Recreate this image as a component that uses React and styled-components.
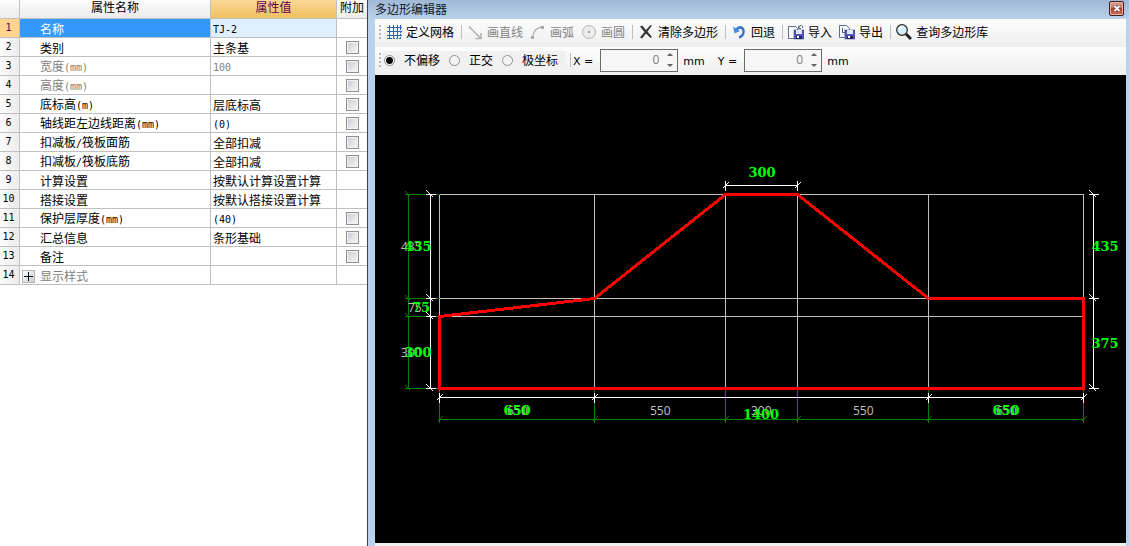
import React, { useState } from "react";
import styled, { createGlobalStyle } from "styled-components";

const GlobalStyle = createGlobalStyle`
  * { box-sizing: border-box; }
  body {
    margin: 0;
    background: #fff;
    color: #000;
    font: 12px/14px "Noto Sans CJK SC", sans-serif;
  }
  button, input { font: inherit; color: inherit; margin: 0; }
`;

const Page = styled.div`
  display: flex;
  min-height: 100vh;
`;

/* ---------- property grid ---------- */

const PropertyPanel = styled.section`
  flex: 0 0 368px;
  background: #fff;
  border-right: 1px solid #404040;
`;

const Grid = styled.table`
  width: 100%;
  table-layout: fixed;
  border-collapse: separate;
  border-spacing: 0;
`;

const Col = styled.col`
  width: ${(p) => p.$w};
`;

const HeadCell = styled.th`
  height: 19px;
  padding: 0 0 4px;
  font-weight: 400;
  text-align: center;
  white-space: nowrap;
  color: ${(p) => (p.$active ? "#5c0050" : "#000")};
  background: ${(p) =>
    p.$active
      ? "linear-gradient(#f8d899, #f1c15f)"
      : "linear-gradient(#fbfbfb, #ececec)"};
  border: solid #c0c0c0;
  border-width: 0 1px 1px 0;
  &:last-child { border-right: 0; }
`;

const RowNumber = styled.th`
  height: 19px;
  padding: 0 2px 0 0;
  font: 10px/14px "DejaVu Sans Mono", monospace;
  text-align: center;
  color: ${(p) => (p.$active ? "#5c0050" : "#000")};
  background: ${(p) =>
    p.$active ? "#ffd58d" : "linear-gradient(90deg, #fbfbfb, #ececec)"};
  border: solid #c0c0c0;
  border-width: 0 1px 1px 0;
`;

const Cell = styled.td`
  height: 19px;
  padding: 2px 0 0 2px;
  white-space: nowrap;
  color: ${(p) => (p.$muted ? "#808080" : "#000")};
  background: ${(p) => (p.$active ? "#dfeffe" : "#fff")};
  border: solid #c0c0c0;
  border-width: 0 1px 1px 0;
`;

const NameCell = styled(Cell)`
  color: ${(p) => (p.$active ? "#fff" : p.$muted ? "#808080" : "#000")};
  background: ${(p) => (p.$active ? "#3399ff" : "#fff")};
`;

const CheckCell = styled(Cell)`
  padding: 0;
  border-right: 0;
  text-align: center;
`;

const NameLine = styled.div`
  display: flex;
  align-items: center;
  gap: 5px;
`;

const Gutter = styled.span`
  display: flex;
  width: 13px;
`;

const Expander = styled.button`
  display: grid;
  place-items: center;
  width: 13px;
  height: 13px;
  padding: 0;
  border: 1px solid #b4b4b4;
  background: linear-gradient(135deg, #fff, #c9ced4);
  color: #000;
`;

const Latin = styled.span`
  font-family: "DejaVu Sans Mono", monospace;
  font-size: 10px;
`;

const Check = styled.input`
  display: block;
  appearance: none;
  width: 13px;
  height: 13px;
  margin: 0 auto;
  border: 1px solid #8e8f8f;
  background: linear-gradient(135deg, #cdd1d7, #f3f3f3) content-box, #f2f2f2;
  padding: 1px;
`;

const rows = [
  { name: "名称", value: "TJ-2", active: true },
  { name: "类别", value: "主条基", check: true },
  { name: "宽度(mm)", value: "100", check: true, muted: true },
  { name: "高度(mm)", value: "", check: true, muted: true },
  { name: "底标高(m)", value: "层底标高", check: true },
  { name: "轴线距左边线距离(mm)", value: "(0)", check: true },
  { name: "扣减板/筏板面筋", value: "全部扣减", check: true },
  { name: "扣减板/筏板底筋", value: "全部扣减", check: true },
  { name: "计算设置", value: "按默认计算设置计算" },
  { name: "搭接设置", value: "按默认搭接设置计算" },
  { name: "保护层厚度(mm)", value: "(40)", check: true },
  { name: "汇总信息", value: "条形基础", check: true },
  { name: "备注", value: "", check: true },
  { name: "显示样式", value: "", muted: true, expandable: true },
];

/* Half-width characters are set in the mono face, the rest in the CJK one. */
function Mixed({ text }) {
  return text
    .split(/([\x20-\x7e]+)/)
    .filter(Boolean)
    .map((part, i) =>
      /^[\x20-\x7e]/.test(part) ? <Latin key={i}>{part}</Latin> : <span key={i}>{part}</span>
    );
}

function PropertyGrid() {
  return (
    <PropertyPanel>
      <Grid>
        <colgroup>
          <Col $w="20px" />
          <Col $w="191px" />
          <Col $w="126px" />
          <Col $w="auto" />
        </colgroup>
        <thead>
          <tr>
            <HeadCell />
            <HeadCell scope="col">属性名称</HeadCell>
            <HeadCell scope="col" $active>属性值</HeadCell>
            <HeadCell scope="col">附加</HeadCell>
          </tr>
        </thead>
        <tbody>
          {rows.map((r, i) => (
            <tr key={r.name}>
              <RowNumber scope="row" $active={r.active}>{i + 1}</RowNumber>
              <NameCell $active={r.active} $muted={r.muted}>
                <NameLine>
                  <Gutter>
                    {r.expandable && (
                      <Expander aria-label="展开">
                        <svg width="9" height="9" shapeRendering="crispEdges">
                          <path d="M4 0h1v9h-1zM0 4h9v1h-9z" fill="#000" />
                        </svg>
                      </Expander>
                    )}
                  </Gutter>
                  <span><Mixed text={r.name} /></span>
                </NameLine>
              </NameCell>
              <Cell $active={r.active} $muted={r.muted}><Mixed text={r.value} /></Cell>
              <CheckCell>
                {r.check && <Check type="checkbox" aria-label={r.name} />}
              </CheckCell>
            </tr>
          ))}
        </tbody>
      </Grid>
    </PropertyPanel>
  );
}

/* ---------- polygon editor ---------- */

const Editor = styled.section`
  flex: 1;
  min-width: 0;
  display: flex;
  flex-direction: column;
  padding: 0 3px 0 7px;
  background: linear-gradient(#9fb9d6, #b9d1ea 19px);
`;

const TitleBar = styled.header`
  display: flex;
  align-items: center;
  justify-content: space-between;
  height: 19px;
  padding: 0 2px 2px 0;
  color: #101820;
`;

const Title = styled.h1`
  margin: 0;
  font: inherit;
`;

const CloseButton = styled.button`
  display: grid;
  place-items: center;
  width: 15px;
  height: 15px;
  padding: 0;
  border: 1px solid #471b20;
  border-radius: 2px;
  background: linear-gradient(#dca193, #c87565 45%, #b13e2b 50%, #c9735f);
  box-shadow: inset 0 0 0 1px #e2b3a8;
`;

const Toolbar = styled.div`
  display: flex;
  align-items: center;
  height: 28px;
  padding: 0 0 2px 4px;
  background: linear-gradient(#fdfdfd, #eeeeee);
`;

const Grip = styled.span`
  width: 2px;
  height: 14px;
  margin-right: 1px;
  background: repeating-linear-gradient(#b8b8b8 0 2px, transparent 2px 4px);
`;

const Tool = styled.button`
  display: flex;
  align-items: center;
  gap: 4px;
  padding: 0 3px 0 4px;
  border: 0;
  background: none;
  white-space: nowrap;
  &:disabled { color: #838383; }
`;

const Separator = styled.span`
  width: 1px;
  height: 14px;
  margin: 0 1px 0 4px;
  background: #bdbdbd;
`;

const RadioGroup = styled.div`
  display: flex;
  align-items: center;
  gap: 9px;
  height: 18px;
  padding: 0 8px 0 2px;
  background: #f0f0f0;
`;

const RadioLabel = styled.label`
  display: flex;
  align-items: center;
  gap: 9px;
  white-space: nowrap;
`;

const Radio = styled.input`
  appearance: none;
  width: 11px;
  height: 11px;
  border: 1px solid #8e8f8f;
  border-radius: 50%;
  background: #f4f4f4;
  &:checked { background: radial-gradient(circle, #000 3px, #f8f8f8 4px); }
`;

const Field = styled.div`
  display: flex;
  align-items: center;
  margin-right: 12px;
  font: 11px/14px "DejaVu Sans", sans-serif;
`;

const FieldLabel = styled.label`
  padding: 4px 7px 0 1px;
  white-space: nowrap;
`;

const Unit = styled.span`
  padding-top: 4px;
`;

const SpinBox = styled.span`
  display: flex;
  width: 78px;
  height: 23px;
  margin-right: 5px;
  border: 1px solid #6a6a6a;
  background: #f6f6f6;
`;

const SpinInput = styled.input`
  flex: 1;
  min-width: 0;
  padding: 0 4px 0 0;
  border: 0;
  outline: 0;
  background: none;
  color: #808080;
  text-align: right;
  font: 12px/14px "Open Sans", sans-serif;
`;

const SpinButtons = styled.span`
  display: flex;
  flex-direction: column;
  width: 14px;
`;

const SpinButton = styled.button`
  flex: 1;
  display: grid;
  place-items: center;
  padding: 0;
  border: 0;
  background: none;
`;

const Canvas = styled.svg`
  display: block;
  flex: 1;
  width: 100%;
  min-height: 360px;
  background: #000;
`;

const StatusStrip = styled.footer`
  height: 3px;
  background: #f0f0f0;
`;

const DimText = styled.text`
  fill: #00ff00;
  font: bold 13px "DejaVu Serif", serif;
`;

const GridText = styled.text`
  fill: #c0c0c0;
  font: 12px "Open Sans", sans-serif;
`;

/* ---------- icons ---------- */

const Icon = ({ children }) => (
  <svg width="16" height="16" viewBox="0 0 16 16" fill="none">{children}</svg>
);

const GridIcon = () => (
  <Icon>
    <path d="M3.5 1v14M7.5 1v14M11.5 1v14M1 3.5h15M1 7.5h15M1 11.5h15" stroke="#2f62c0" shapeRendering="crispEdges" />
    <path d="M14.5 1v14M1 14.5h14" stroke="#2f62c0" strokeDasharray="2 1" shapeRendering="crispEdges" />
  </Icon>
);
const LineIcon = () => (
  <Icon>
    <path d="M2 2.5L13 13.5M14 9v5.500H8.500" stroke="#b0b0b0" strokeWidth="1.500" />
  </Icon>
);
const ArcIcon = () => (
  <Icon>
    <path d="M3 13C3 8 6 4 12 3" stroke="#b4b4b4" strokeWidth="1.300" />
    <rect x="1" y="12" width="3" height="3" fill="#a8a8a8" />
    <rect x="11" y="2" width="3" height="3" fill="#a8a8a8" />
  </Icon>
);
const CircleIcon = () => (
  <Icon>
    <circle cx="8" cy="8" r="6.500" fill="#ececec" stroke="#b4b4b4" />
    <rect x="7" y="7" width="2" height="2" fill="#999" />
  </Icon>
);
const ClearIcon = () => (
  <Icon>
    <path d="M2 2.500L4 1.500L8 6L12.500 1L14 1.500L9.500 7.500L14 13L12.500 14L8 9.500L4 14.500L2 13.500L6.500 8Z" fill="#343434" />
  </Icon>
);
const UndoIcon = () => (
  <Icon>
    <path d="M5.500 5.500C8 2 12.500 3 12.500 7.500C12.500 10.500 11 12.500 8 13.500" stroke="#3b74c9" strokeWidth="2.500" />
    <path d="M2 2.500L3.500 9.500L9 7Z" fill="#4c8add" />
  </Icon>
);
const Disk = () => (
  <>
    <rect x="6" y="6" width="10" height="9" fill="#5757b5" stroke="#34348a" strokeWidth="0.500" />
    <rect x="8" y="6" width="6" height="4" fill="#dfe6fa" />
    <rect x="8" y="12" width="6" height="3" fill="#252560" />
    <rect x="9" y="12" width="2" height="2" fill="#fff" />
  </>
);
const ImportIcon = () => (
  <Icon>
    <path d="M.5 2.500H7.500L9.500 4.500V14.500H.5Z" fill="#f8fbff" stroke="#5d6f94" />
    <path d="M11 1.500L10.500 4.500H13M10.500 4C12 .5 15.500 1 14.500 4" stroke="#4c5a78" />
    <Disk />
  </Icon>
);
const ExportIcon = () => (
  <Icon>
    <path d="M.5 1.500H7.500L10.500 4.500V13.500H.5Z" fill="#f3f7fe" stroke="#5d6f94" />
    <path d="M3.500 4V8.500H7M5.500 6L7.500 8.500L5.500 10.500" stroke="#4c5a78" />
    <Disk />
  </Icon>
);
const SearchIcon = () => (
  <Icon>
    <circle cx="6" cy="6" r="5.300" fill="#d4effd" stroke="#252525" strokeWidth="1.200" />
    <path d="M3 6C3 4 4.500 3 6 3" stroke="#fff" strokeWidth="1.500" />
    <path d="M10 10L15 15" stroke="#202020" strokeWidth="3" />
  </Icon>
);

const toolGroups = [
  [["定义网格", GridIcon]],
  [["画直线", LineIcon, true], ["画弧", ArcIcon, true], ["画圆", CircleIcon, true]],
  [["清除多边形", ClearIcon]],
  [["回退", UndoIcon]],
  [["导入", ImportIcon], ["导出", ExportIcon]],
  [["查询多边形库", SearchIcon]],
];

function OffsetField({ axis }) {
  const [value, setValue] = useState(0);
  const id = `offset-${axis}`;
  return (
    <Field>
      <FieldLabel htmlFor={id}>{axis} =</FieldLabel>
      <SpinBox>
        <SpinInput id={id} value={value} onChange={(e) => setValue(e.target.value)} />
        <SpinButtons>
          <SpinButton aria-label={`${axis} +`} onClick={() => setValue(Number(value) + 1)}>
            <svg width="6" height="3"><path d="M0 3L3 0L6 3Z" fill="#606060" /></svg>
          </SpinButton>
          <SpinButton aria-label={`${axis} -`} onClick={() => setValue(Number(value) - 1)}>
            <svg width="6" height="3"><path d="M0 0L3 3L6 0Z" fill="#606060" /></svg>
          </SpinButton>
        </SpinButtons>
      </SpinBox>
      <Unit>mm</Unit>
    </Field>
  );
}

/* ---------- drawing ---------- */

const xs = [64, 219, 350, 422, 553, 708];
const ys = [119, 223, 241, 313];

const tickOnRow = (x, y, r) => `M${x} ${y - r}V${y + r}M${x - 3} ${y + 3}L${x + 3} ${y - 3}`;
const tickOnColumn = (x, y, r) => `M${x - r} ${y}H${x + r}M${x - 4} ${y - 4}L${x + 3} ${y + 3}`;

const gridLines =
  xs.map((x) => `M${x} ${ys[0]}V${ys[3]}`).join("") +
  ys.map((y) => `M${xs[0]} ${y}H${xs[5]}`).join("");

const greenDims =
  `M33 ${ys[0]}V${ys[3]}M${xs[0]} 344H${xs[5]}` +
  xs.map((x) => `M${x} ${ys[3]}V347M${x - 2} 346L${x + 3} 341`).join("") +
  ys.map((y) => `M29 ${y}H${xs[0]}M30 ${y - 3}L35 ${y + 2}`).join("");

const whiteDims =
  `M55 ${ys[0]}V${ys[3]}M718 ${ys[0]}V${ys[3]}M${xs[0]} 322H${xs[5]}M${xs[2]} 110H${xs[3]}` +
  ys.map((y) => tickOnColumn(55, y, 5)).join("") +
  [ys[0], ys[1], ys[3]].map((y) => tickOnColumn(718, y, 5)).join("") +
  [xs[0], xs[1], xs[4], xs[5]].map((x) => tickOnRow(x, 322, 5)).join("") +
  [xs[2], xs[3]].map((x) => tickOnRow(x, 110, 5)).join("");

const outline = [
  [64, 241], [219, 223], [350, 119], [422, 119], [553, 223], [708, 223], [708, 313], [64, 313],
];

const gridTexts = [
  [26, 176, "435"], [33, 237, "75"], [26, 282, "300"],
  [132, 340, "650"], [275, 340, "550"], [376, 340, "300"], [478, 340, "550"], [621, 340, "650"],
];

const dimTexts = [
  [43, 176, "435"], [46, 237, "75"], [43, 282, "300"],
  [142, 340, "650"], [387, 102, "300"], [386, 344, "1400"], [631, 340, "650"],
  [730, 176, "435"], [730, 273, "375"],
];

function Drawing() {
  return (
    <Canvas role="img" aria-label="条形基础截面">
      <g transform="translate(.5 .5)" fill="none" shapeRendering="crispEdges">
        <path d={gridLines} stroke="#c0c0c0" />
        <path d={greenDims} stroke="#008000" />
      </g>
      {gridTexts.map(([x, y, t]) => <GridText key={`${x}-${y}`} x={x} y={y}>{t}</GridText>)}
      <g transform="translate(.5 .5)" fill="none" shapeRendering="crispEdges">
        <path d={whiteDims} stroke="#fff" />
        <polygon points={outline.join(" ")} stroke="#f00" strokeWidth="3" />
      </g>
      {dimTexts.map(([x, y, t]) => (
        <DimText key={`${x}-${y}`} x={x} y={y} textAnchor="middle">{t}</DimText>
      ))}
    </Canvas>
  );
}

export default function App() {
  return (
    <Page>
      <GlobalStyle />
      <PropertyGrid />
      <Editor>
        <TitleBar>
          <Title>多边形编辑器</Title>
          <CloseButton aria-label="关闭">
            <svg width="8" height="7" viewBox="0 0 8 7">
              <path d="M1.500 1L6.500 6M6.500 1L1.500 6" stroke="#4b3035" strokeWidth="3" />
              <path d="M1.500 1L6.500 6M6.500 1L1.500 6" stroke="#fff" strokeWidth="1.800" />
            </svg>
          </CloseButton>
        </TitleBar>
        <Toolbar>
          <Grip />
          {toolGroups.map((group, i) => (
            <React.Fragment key={i}>
              {i > 0 && <Separator />}
              {group.map(([label, Glyph, disabled]) => (
                <Tool key={label} disabled={disabled}>
                  <Glyph />
                  {label}
                </Tool>
              ))}
            </React.Fragment>
          ))}
        </Toolbar>
        <Toolbar>
          <Grip />
          <RadioGroup role="radiogroup">
            {["不偏移", "正交", "极坐标"].map((label, i) => (
              <RadioLabel key={label}>
                <Radio type="radio" name="offset" defaultChecked={i === 0} />
                {label}
              </RadioLabel>
            ))}
          </RadioGroup>
          <Separator />
          <OffsetField axis="X" />
          <OffsetField axis="Y" />
        </Toolbar>
        <Drawing />
        <StatusStrip />
      </Editor>
    </Page>
  );
}
